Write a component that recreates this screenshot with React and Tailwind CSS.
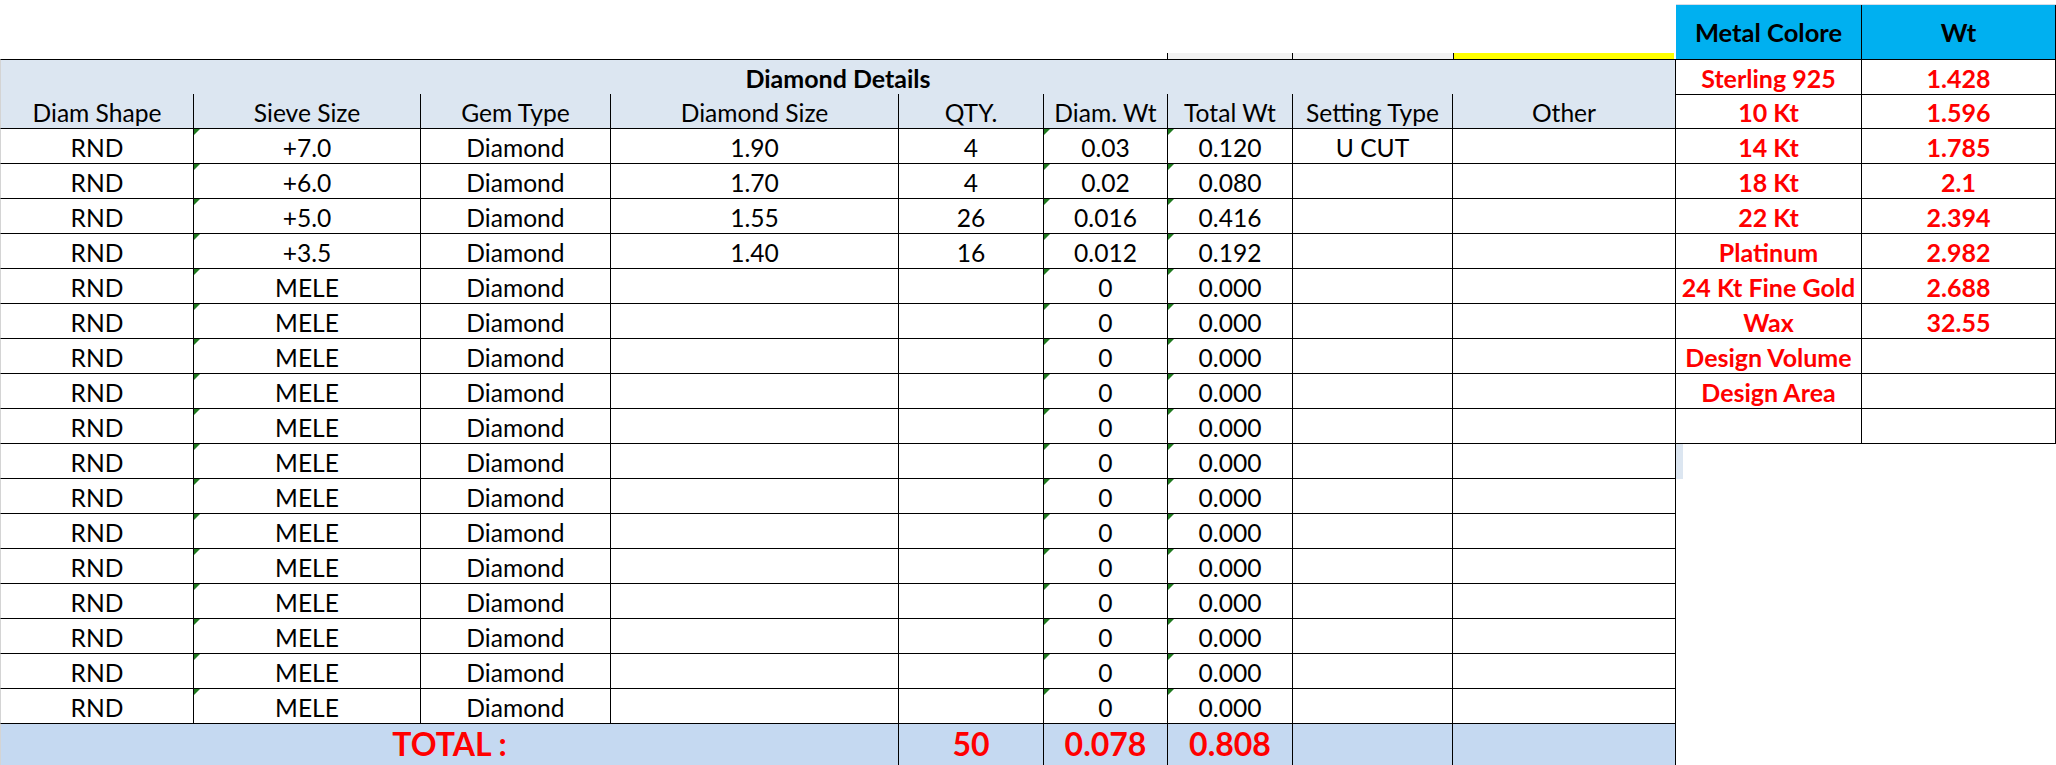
import React from "react";

const dataRows = [
  ["RND", "+7.0", "Diamond", "1.90", "4", "0.03", "0.120", "U CUT", ""],
  ["RND", "+6.0", "Diamond", "1.70", "4", "0.02", "0.080", "", ""],
  ["RND", "+5.0", "Diamond", "1.55", "26", "0.016", "0.416", "", ""],
  ["RND", "+3.5", "Diamond", "1.40", "16", "0.012", "0.192", "", ""],
  ...Array.from({ length: 13 }, () => ["RND", "MELE", "Diamond", "", "", "0", "0.000", "", ""]),
];

const metals = [
  ["Sterling 925", "1.428"],
  ["10 Kt", "1.596"],
  ["14 Kt", "1.785"],
  ["18 Kt", "2.1"],
  ["22 Kt", "2.394"],
  ["Platinum", "2.982"],
  ["24 Kt Fine Gold", "2.688"],
  ["Wax", "32.55"],
  ["Design Volume", ""],
  ["Design Area", ""],
  ["", ""],
];

const headers = [
  "Diam Shape",
  "Sieve Size",
  "Gem Type",
  "Diamond Size",
  "QTY.",
  "Diam. Wt",
  "Total Wt",
  "Setting Type",
  "Other",
];

const triangleCols = [1, 5, 6];

function Tri() {
  return (
    <span className="absolute top-0 left-0 w-0 h-0 border-t-[6px] border-t-[#1f7a1f] border-r-[6px] border-r-transparent" />
  );
}

function MetalCells({ m }) {
  return (
    <>
      <div className="border-r border-b border-black text-center leading-[37px] text-[25px] font-bold text-[#ff0000] whitespace-nowrap overflow-hidden">
        {m[0]}
      </div>
      <div className="border-r border-b border-black text-center leading-[37px] text-[25px] font-bold text-[#ff0000] whitespace-nowrap overflow-hidden">
        {m[1]}
      </div>
    </>
  );
}

export default function App() {
  return (
    <div
      className="w-[2056px] h-[765px] overflow-hidden bg-white text-black text-[24.6px]"
      style={{ fontFamily: "Lato, 'Noto Sans', sans-serif" }}
    >
      {/* top strip */}
      <div className="flex h-[59px]">
        <div className="w-[1676px] flex items-end">
          <div className="w-[1167px]" />
          <div className="w-[125px] h-[6px] bg-[#f2f2f2] border-l border-black" />
          <div className="w-[161px] h-[6px] bg-[#f2f2f2] border-l border-black" />
          <div className="w-[221px] h-[6px] bg-[#ffff00] border-l border-black" />
        </div>
        <div className="w-[380px] flex flex-col pt-[4px]">
          <div className="flex-1 flex border-t border-[#d6dde8] bg-[#00b0f0] font-bold text-[25.5px] overflow-hidden">
            <div className="w-[186px] border-r border-black text-center leading-[55px] whitespace-nowrap">Metal Colore</div>
            <div className="w-[194px] border-r border-black text-center leading-[55px]">Wt</div>
          </div>
        </div>
      </div>

      <div className="grid grid-cols-[194px_227px_190px_288px_145px_124px_125px_160px_223px_186px_194px] auto-rows-[35px]">
        {/* Diamond Details row */}
        <div className="col-span-9 h-[36px] bg-[#dce6f1] border-t border-b border-r border-black border-l border-l-[#d4d4d4] text-center leading-[36px] text-[25px] font-bold">
          Diamond Details
        </div>
        <div className="h-[36px] border-t border-r border-b border-black text-center leading-[36px] text-[25px] font-bold text-[#ff0000] whitespace-nowrap">
          {metals[0][0]}
        </div>
        <div className="h-[36px] border-t border-r border-b border-black text-center leading-[36px] text-[25px] font-bold text-[#ff0000] whitespace-nowrap">
          {metals[0][1]}
        </div>

        {/* column headers */}
        {headers.map((h, i) => (
          <div
            key={h}
            className={
              "bg-[#dce6f1] border-r border-b border-black text-center leading-[38px] whitespace-nowrap overflow-hidden" +
              (i === 0 ? " border-l border-l-[#d4d4d4]" : "")
            }
          >
            {h}
          </div>
        ))}
        <MetalCells m={metals[1]} />

        {/* data rows */}
        {dataRows.map((r, ri) => (
          <React.Fragment key={ri}>
            {r.map((c, ci) => (
              <div
                key={ci}
                className={
                  "relative border-r border-b border-black text-center leading-[38px] whitespace-nowrap overflow-hidden" +
                  (ci === 0 ? " border-l border-l-[#d4d4d4]" : "")
                }
              >
                {triangleCols.includes(ci) && <Tri />}
                {c}
              </div>
            ))}
            {ri + 2 < metals.length ? (
              <MetalCells m={metals[ri + 2]} />
            ) : ri + 2 === metals.length ? (
              <>
                <div className="flex">
                  <div className="w-[7px] h-full bg-[#dce6f1]" />
                </div>
                <div />
              </>
            ) : (
              <>
                <div />
                <div />
              </>
            )}
          </React.Fragment>
        ))}

        {/* total row */}
        <div className="col-span-4 h-[48px] bg-[#c5d9f1] border-r border-black border-l border-l-[#d4d4d4] text-center font-bold text-[#ff0000] text-[32px] leading-none pt-[4px]">
          TOTAL :
        </div>
        <div className="h-[48px] bg-[#c5d9f1] border-r border-black text-center font-bold text-[#ff0000] text-[32px] leading-none pt-[4px]">
          50
        </div>
        <div className="h-[48px] bg-[#c5d9f1] border-r border-black text-center font-bold text-[#ff0000] text-[32px] leading-none pt-[4px]">
          0.078
        </div>
        <div className="h-[48px] bg-[#c5d9f1] border-r border-black text-center font-bold text-[#ff0000] text-[32px] leading-none pt-[4px]">
          0.808
        </div>
        <div className="h-[48px] bg-[#c5d9f1] border-r border-black" />
        <div className="h-[48px] bg-[#c5d9f1] border-r border-black" />
        <div />
        <div />
      </div>
    </div>
  );
}
